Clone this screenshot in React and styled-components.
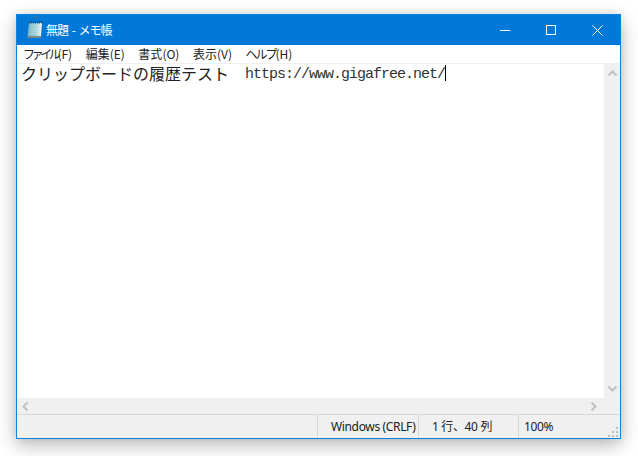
import React from "react";
import styled, { createGlobalStyle } from "styled-components";

const menus = [
  { kana: "ファイル", key: "(F)", squeeze: -3.4 },
  { kana: "編集", key: "(E)", squeeze: 0 },
  { kana: "書式", key: "(O)", squeeze: 0 },
  { kana: "表示", key: "(V)", squeeze: 0 },
  { kana: "ヘルプ", key: "(H)", squeeze: -2 },
];

const Arrow = ({ d }) => (
  <svg width="9" height="9" viewBox="0 0 9 9">
    <path d={d} fill="none" stroke="#c2c2c2" strokeWidth="2" />
  </svg>
);

const NoteIcon = () => (
  <svg width="17" height="18" viewBox="0 0 17 18">
    <defs>
      <linearGradient id="page" x1="0" x2="1" y1="0" y2="0">
        <stop offset="0" stopColor="#6fb4c2" />
        <stop offset="0.6" stopColor="#a3d3da" />
        <stop offset="0.85" stopColor="#d9ecea" />
        <stop offset="1" stopColor="#fbfbf6" />
      </linearGradient>
    </defs>
    <path d="M3 2h13l-1 13H1.500z" fill="url(#page)" />
    <path d="M1.500 15H15l-.3 2H1.500z" fill="#7d8a87" />
    <path d="M3 1.500h13" stroke="#3a4952" strokeWidth="2" strokeDasharray="1 1" />
    <path d="M4 5h10M4 7.500h10M3.500 10h10M3.500 12.500h10" stroke="#c4e4e6" strokeWidth=".6" />
  </svg>
);

export default function App() {
  return (
    <Page>
      <GlobalStyle />
      <Window>
        <TitleBar>
          <TitleIcon><NoteIcon /></TitleIcon>
          <Title>無題 - メモ帳</Title>
          <Controls>
            <Control>
              <svg width="10" height="10" viewBox="0 0 10 10"><path d="M0 5.500h10" stroke="#fff" /></svg>
            </Control>
            <Control>
              <svg width="10" height="10" viewBox="0 0 10 10"><rect x=".5" y=".5" width="9" height="9" fill="none" stroke="#fff" /></svg>
            </Control>
            <Control>
              <svg width="11" height="11" viewBox="0 0 11 11"><path d="M.5.500l10 10M10.500.500l-10 10" stroke="#fff" /></svg>
            </Control>
          </Controls>
        </TitleBar>
        <MenuBar>
          {menus.map(m => (
            <MenuItem key={m.key}>
              <MenuKana $squeeze={m.squeeze}>{m.kana}</MenuKana>{m.key}
            </MenuItem>
          ))}
        </MenuBar>
        <EditorRow>
          <Editor>
            <Kana>クリップボードの履歴テスト</Kana>
            <Latin>{"  https://www.gigafree.net/"}</Latin>
            <Caret />
          </Editor>
          <VScroll>
            <Arrow d="M.5 6.500l4-4 4 4" />
            <Arrow d="M.5 2.500l4 4 4-4" />
          </VScroll>
        </EditorRow>
        <HScroll>
          <Arrow d="M6.500.500l-4 4 4 4" />
          <Arrow d="M2.500.500l4 4-4 4" />
        </HScroll>
        <StatusBar>
          <StatusCell $width={101}>Windows (CRLF)</StatusCell>
          <StatusCell $width={100}>1 行、40 列</StatusCell>
          <ZoomCell $width={60}>100%</ZoomCell>
          <Grip>
            <svg width="12" height="12" viewBox="0 0 12 12">
              <path d="M8 0h2v2H8zM4 4h2v2H4zM8 4h2v2H8zM0 8h2v2H0zM4 8h2v2H4zM8 8h2v2H8z" fill="#bdbdbd" />
            </svg>
          </Grip>
        </StatusBar>
      </Window>
    </Page>
  );
}

const GlobalStyle = createGlobalStyle`
html, body {
  margin: 0;
  background: #fff;
}
`
const Page = styled.div`
width: 638px;
height: 456px;
padding: 14px 0 0 16px;
box-sizing: border-box;
overflow: hidden;
`
const Window = styled.div`
width: 605px;
height: 425px;
box-sizing: border-box;
border: 1px solid #0a84e0;
background: #fff;
display: flex;
flex-direction: column;
box-shadow: 0 6px 18px rgba(0, 0, 0, 0.28), 0 0 8px rgba(0, 0, 0, 0.08);
font-family: "Noto Sans", "Noto Sans CJK JP", sans-serif;
`
const TitleBar = styled.div`
height: 30px;
flex: none;
background: #0078d7;
display: flex;
align-items: center;
padding-left: 9px;
`
const TitleIcon = styled.div`
width: 20px;
height: 18px;
display: flex;
`
const Title = styled.div`
color: #fff;
font-size: 12px;
line-height: 14px;
letter-spacing: -1px;
word-spacing: 2px;
padding-bottom: 1px;
font-family: "Noto Sans CJK JP", sans-serif;
`
const Controls = styled.div`
margin-left: auto;
display: flex;
`
const Control = styled.div`
width: 46px;
height: 30px;
display: flex;
align-items: center;
justify-content: center;
`
const MenuBar = styled.div`
height: 18px;
flex: none;
background: #fff;
display: flex;
align-items: center;
gap: 13.5px;
padding-left: 6px;
`
const MenuItem = styled.div`
font-size: 12px;
line-height: 14px;
font-family: "Noto Sans CJK JP", sans-serif;
color: #222;
white-space: nowrap;
`
const MenuKana = styled.span`
letter-spacing: ${p => p.$squeeze}px;
`
const EditorRow = styled.div`
flex: 1;
min-height: 0;
display: flex;
border-top: 1px solid #f0f0f0;
`
const Editor = styled.div`
flex: 1;
padding: 0 0 0 4px;
height: 18px;
white-space: pre;
color: #222;
display: flex;
align-items: center;
`
const Kana = styled.span`
font-family: "Noto Sans CJK JP", sans-serif;
font-size: 16px;
line-height: 16px;
margin-top: -1px;
`
const Latin = styled.span`
font-family: "Liberation Mono", monospace;
font-size: 15px;
line-height: 16px;
letter-spacing: -1px;
color: #333;
margin-top: 3px;
`
const Caret = styled.span`
width: 1px;
height: 16px;
background: #000;
`
const VScroll = styled.div`
width: 16px;
flex: none;
background: #f0f0f0;
display: flex;
flex-direction: column;
justify-content: space-between;
align-items: center;
padding: 5px 0;
box-sizing: border-box;
`
const HScroll = styled.div`
height: 16px;
flex: none;
background: #f0f0f0;
display: flex;
align-items: center;
justify-content: space-between;
padding: 0 22px 0 4px;
border-bottom: 1px solid #d7d7d7;
box-sizing: content-box;
`
const StatusBar = styled.div`
height: 23px;
flex: none;
background: #f0f0f0;
display: flex;
padding-left: 300px;
position: relative;
font-size: 12px;
letter-spacing: -0.35px;
color: #222;
`
const StatusCell = styled.div`
width: ${p => p.$width}px;
box-sizing: border-box;
border-left: 1px solid #d7d7d7;
padding-left: 13px;
line-height: 23px;
white-space: nowrap;
`
const ZoomCell = styled(StatusCell)`
padding-left: 5px;
`
const Grip = styled.div`
position: absolute;
right: 0;
bottom: 0;
width: 12px;
height: 12px;
`
